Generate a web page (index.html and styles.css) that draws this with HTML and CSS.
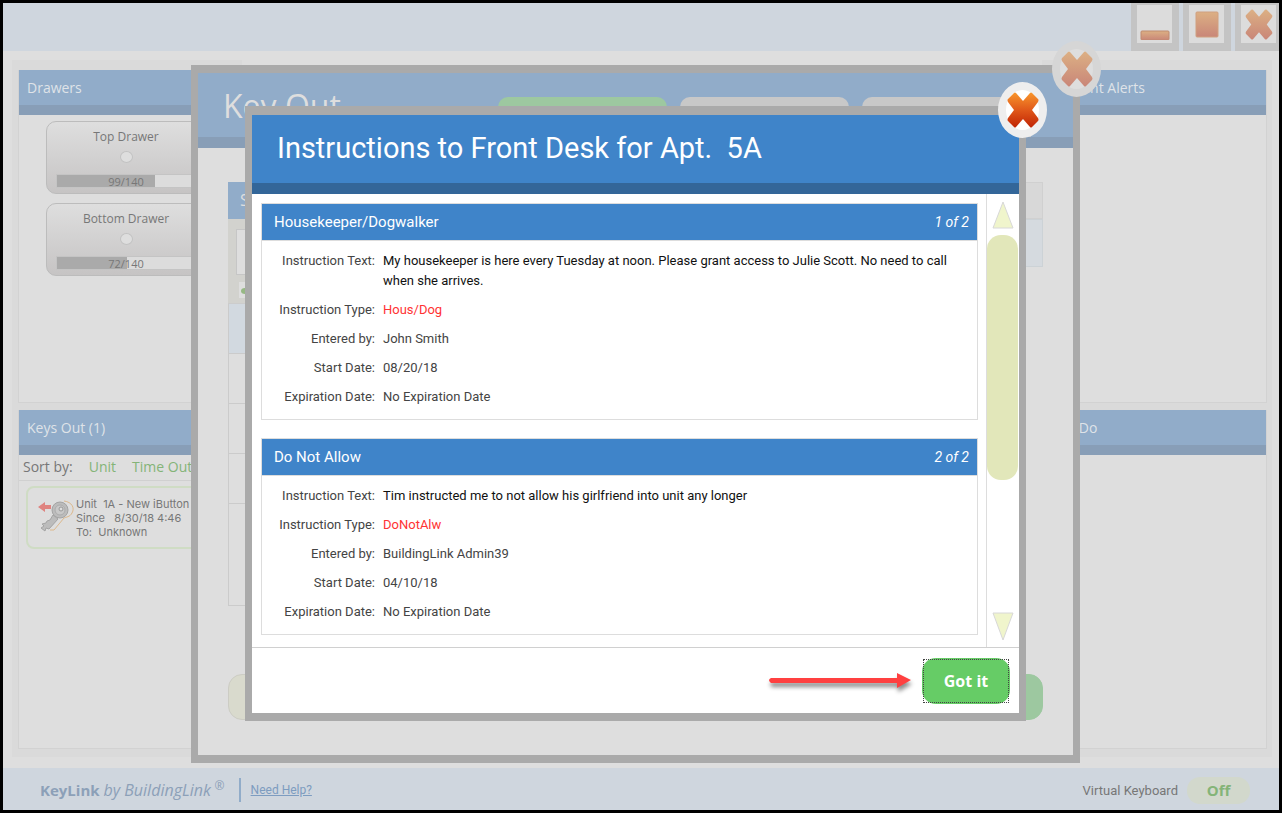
FILE: index.html
```html
<!DOCTYPE html>
<html lang="en">

<head>
  <title>KeyLink</title>

  <meta charset="utf-8">
  <meta name="viewport" content="width=device-width, initial-scale=1">
  <link rel="stylesheet" href="styles.css">
</head>

<body>
  <!-- shared icon shapes -->
  <svg class="defs" width="0" height="0" aria-hidden="true">
    <defs>
      <linearGradient id="orange" x1="0" y1="0" x2="0" y2="1">
        <stop offset="0" stop-color="#f8962c" />
        <stop offset="0.5" stop-color="#e0581a" />
        <stop offset="1" stop-color="#c02404" />
      </linearGradient>
      <linearGradient id="orangeDim" x1="0" y1="0" x2="0" y2="1">
        <stop offset="0" stop-color="#dcb084" />
        <stop offset="1" stop-color="#c98678" />
      </linearGradient>
      <path id="cross" d="M9 1 L16 9 L23 1 Q24 0 25 1 L31 7 Q32 8 31 10 L25 18 L31 26 Q32 28 31 29 L25 35 Q24 36 23 35 L16 27 L9 35 Q8 36 7 35 L1 29 Q0 28 1 26 L7 18 L1 10 Q0 8 1 7 L7 1 Q8 0 9 1 Z" />
    </defs>
  </svg>

  <div class="app">
    <header class="titlebar">
      <button class="win-btn" type="button" aria-label="Minimize">
        <svg width="30" height="32" viewBox="0 0 30 32">
          <rect x="1" y="23" width="28" height="9" rx="1" fill="url(#orangeDim)" stroke="#c08a70" />
        </svg>
      </button>
      <button class="win-btn" type="button" aria-label="Maximize">
        <svg width="30" height="32" viewBox="0 0 30 32">
          <rect x="4" y="4" width="22" height="25" rx="1" fill="url(#orangeDim)" stroke="#d0a080" />
        </svg>
      </button>
      <button class="win-btn" type="button" aria-label="Close window">
        <svg width="28" height="31" viewBox="0 0 32 36">
          <use href="#cross" fill="url(#orangeDim)" />
        </svg>
      </button>
    </header>

    <main class="board">
      <div class="column">
        <section class="panel panel-top">
          <h2>Drawers</h2>
          <div class="drawers">
            <div class="drawer">
              <h3>Top Drawer</h3>
              <span class="knob"></span>
              <div class="meter">
                <div class="fill" style="width: 71%"></div>
                <span>99/140</span>
              </div>
            </div>
            <div class="drawer">
              <h3>Bottom Drawer</h3>
              <span class="knob"></span>
              <div class="meter">
                <div class="fill" style="width: 51%"></div>
                <span>72/140</span>
              </div>
            </div>
          </div>
        </section>
        <section class="panel panel-bottom">
          <h2>Keys Out (1)</h2>
          <div class="sort">
            <span>Sort by:</span>
            <a href="#unit">Unit</a>
            <a href="#time">Time Out</a>
          </div>
          <div class="key-card">
            <svg width="36" height="32" viewBox="0 0 36 32" aria-hidden="true">
              <path d="M0 7 L7 2 V5 H13 V9 H7 V12 Z" fill="#df8480" />
              <path d="M26 1 C34 2 37 8 34 13 C32 17 28 17 26 18 L16 30 L12 30" fill="none" stroke="#dcb88c" stroke-width="1" />
              <path d="M15 15 L20 19 L11 29 L8 28 L7 31 L3 28 L6 26 L4 24 L8 23 L9 21 L12 20 Z" fill="#bcbcbc" stroke="#a4a4a4" />
              <circle cx="22" cy="10" r="8" fill="#bcbcbc" stroke="#a4a4a4" />
              <circle cx="22" cy="10" r="5" fill="#c8c8c8" stroke="#acacac" />
              <circle cx="23" cy="9" r="2" fill="#dedede" stroke="#989898" />
            </svg>
            <p>
              Unit&nbsp; 1A - New iButton<br>
              Since&nbsp;&nbsp; 8/30/18 4:46<br>
              To:&nbsp; Unknown
            </p>
          </div>
        </section>
      </div>
      <div class="column column-right">
        <section class="panel panel-top">
          <h2>Recent Alerts</h2>
        </section>
        <section class="panel panel-bottom">
          <h2>To Do</h2>
        </section>
      </div>
    </main>

    <footer class="statusbar">
      <p class="brand"><b>KeyLink</b> <i>by BuildingLink</i> <sup>®</sup></p>
      <a class="help" href="#help">Need Help?</a>
      <label class="vk-label" for="vk">Virtual Keyboard</label>
      <button class="vk" id="vk" type="button">Off</button>
    </footer>

    <!-- key out dialog, behind the instructions -->
    <div class="layer layer-keyout">
      <div class="modal">
        <button class="close close-dim" type="button" aria-label="Close key out">
          <svg width="32" height="36" viewBox="0 0 32 36"><use href="#cross" fill="url(#orangeDim)" /></svg>
        </button>
        <header class="modal-head head-dim">
          <h1>Key Out</h1>
          <div class="steps">
            <span class="step step-on"></span>
            <span class="step"></span>
            <span class="step"></span>
          </div>
        </header>
        <div class="keyout-body">
          <div class="search">
            <h2>Search</h2>
            <div class="search-box">
              <input type="text" aria-label="Search">
              <span class="tick"><svg width="10" height="8" viewBox="0 0 10 8"><ellipse cx="5" cy="4" rx="4" ry="3" fill="#96b884" /></svg></span>
            </div>
            <div class="list-row row-on"></div>
            <div class="list-row"></div>
            <div class="list-row"></div>
            <div class="list-row"></div>
            <div class="list-row row-last"></div>
          </div>
          <div class="info">
            <div class="info-head"></div>
            <div class="info-row"></div>
          </div>
        </div>
        <div class="keyout-actions">
          <button class="act" type="button" aria-label="Back"></button>
          <button class="act act-go" type="button" aria-label="Next"></button>
        </div>
      </div>
    </div>

    <div class="layer layer-instructions">
      <div class="modal modal-active" role="dialog" aria-labelledby="title">
        <button class="close" type="button" aria-label="Close">
          <svg width="32" height="36" viewBox="0 0 32 36"><use href="#cross" fill="url(#orange)" /></svg>
        </button>
        <header class="modal-head">
          <h1 id="title">Instructions to Front Desk for Apt.&nbsp; 5A</h1>
        </header>
        <div class="modal-body">
          <div class="cards">
            <article class="card">
              <h2>Housekeeper/Dogwalker <i>1 of 2</i></h2>
              <dl>
                <dt>Instruction Text:</dt>
                <dd class="text">My housekeeper is here every Tuesday at noon. Please grant access to Julie Scott. No need to call when she arrives.</dd>
                <dt>Instruction Type:</dt>
                <dd class="type">Hous/Dog</dd>
                <dt>Entered by:</dt>
                <dd>John Smith</dd>
                <dt>Start Date:</dt>
                <dd>08/20/18</dd>
                <dt>Expiration Date:</dt>
                <dd>No Expiration Date</dd>
              </dl>
            </article>
            <article class="card">
              <h2>Do Not Allow <i>2 of 2</i></h2>
              <dl>
                <dt>Instruction Text:</dt>
                <dd class="text">Tim instructed me to not allow his girlfriend into unit any longer</dd>
                <dt>Instruction Type:</dt>
                <dd class="type">DoNotAlw</dd>
                <dt>Entered by:</dt>
                <dd>BuildingLink Admin39</dd>
                <dt>Start Date:</dt>
                <dd>04/10/18</dd>
                <dt>Expiration Date:</dt>
                <dd>No Expiration Date</dd>
              </dl>
            </article>
          </div>
          <div class="scroll">
            <button type="button" aria-label="Scroll up">
              <svg width="24" height="30" viewBox="0 0 24 30"><path d="M12 2 L22 28 H2 Z" fill="#f0f5cc" stroke="#d8d8d8" /></svg>
            </button>
            <div class="track"><div class="thumb"></div></div>
            <button type="button" aria-label="Scroll down">
              <svg width="24" height="30" viewBox="0 0 24 30"><path d="M12 28 L22 1 H2 Z" fill="#f0f5cc" stroke="#d8d8d8" /></svg>
            </button>
          </div>
        </div>
        <footer class="modal-foot">
          <svg class="arrow" width="146" height="26" viewBox="0 0 146 26" aria-hidden="true">
            <path d="M4 10 H130 V5 L144 12 L130 20 V15 H4 Q0 12 4 10 Z" fill="#ff4040" />
          </svg>
          <button class="got-it" type="button"><span>Got it</span></button>
        </footer>
      </div>
    </div>
  </div>
</body>

</html>
```
FILE: styles.css
```css
* {
  box-sizing: border-box;
}

body {
  margin: 0;
  font-family: "Open Sans", sans-serif;
  color: #777;
}

h1,
h2,
h3,
p,
dl,
dd {
  margin: 0;
  font-weight: normal;
}

button {
  padding: 0;
  border: 0;
  font-family: inherit;
}

svg {
  display: block;
}

.defs {
  position: absolute;
}

.app {
  position: relative;
  display: flex;
  flex-direction: column;
  min-height: 100vh;
  border: 3px solid #000;
  background: #dedede;
}

/* title bar */
.titlebar {
  display: flex;
  justify-content: flex-end;
  gap: 4px;
  height: 48px;
  background: #cfd6de;
}

.win-btn {
  display: flex;
  justify-content: center;
  align-items: center;
  width: 48px;
  border: solid #c4c4c4;
  border-width: 2px 7px 8px 6px;
  background: #dcdcdc;
}

.win-btn:last-child {
  width: 44px;
  border-right-width: 3px;
}

/* board */
.board {
  flex: 1;
  display: flex;
  justify-content: space-between;
  padding: 9px 7px 11px 9px;
}

.column {
  display: flex;
  flex-direction: column;
  gap: 7px;
  width: 230px;
  padding: 10px 0 8px 6px;
  background: #dadada;
}

.column-right {
  padding: 10px 5px 8px 0;
}

.panel {
  border: 1px solid #d2d2d2;
  border-top: 0;
  background: #dedede;
}

.panel-top {
  flex: 333;
}

.panel-bottom {
  flex: 339;
}

.panel h2 {
  height: 45px;
  padding-left: 8px;
  border-bottom: 10px solid #889eb7;
  background: #91acc9;
  color: #dfe3e8;
  font-size: 14px;
  line-height: 36px;
}

.column-right h2 {
  padding-left: 16px;
}

.drawers {
  display: flex;
  flex-direction: column;
  gap: 9px;
  padding: 6px 0 0 27px;
}

.drawer {
  display: flex;
  flex-direction: column;
  align-items: center;
  width: 160px;
  height: 73px;
  padding: 5px 9px;
  border: 1px solid #bcbcbc;
  border-radius: 10px;
  background: linear-gradient(#dedede, #c6c4c4);
}

.drawer h3 {
  font-size: 12px;
  line-height: 20px;
}

.knob {
  width: 13px;
  height: 13px;
  margin: 4px 0 11px;
  border: 1px solid #c2c2c2;
  border-radius: 50%;
  background: #dedede;
}

.meter {
  position: relative;
  width: 100%;
  height: 14px;
  border: 1px solid #c4c4c4;
  background: #dcdcdc;
  font-size: 11px;
  line-height: 13px;
  text-align: center;
}

.meter .fill {
  position: absolute;
  top: 0;
  bottom: 0;
  left: 0;
  background: #aaa;
}

.meter span {
  position: relative;
}

.sort {
  display: flex;
  gap: 16px;
  height: 26px;
  padding-left: 4px;
  border-bottom: 1px solid #d0d0d0;
  font-size: 14px;
  line-height: 24px;
  white-space: nowrap;
}

.sort a {
  color: #84b478;
  text-decoration: none;
}

.key-card {
  display: flex;
  gap: 2px;
  margin: 5px 0 0 7px;
  height: 63px;
  padding: 9px 0 0 10px;
  border: 2px solid #cfdcc4;
  border-radius: 8px;
  font-family: Inter, sans-serif;
  font-size: 11px;
  line-height: 14px;
  white-space: nowrap;
}

.key-card svg {
  flex: none;
  margin-top: 3px;
}

/* status bar */
.statusbar {
  display: flex;
  align-items: center;
  height: 42px;
  padding: 2px 29px 0 37px;
  background: #cfd6de;
}

.brand {
  padding-right: 14px;
  border-right: 2px solid #91acc9;
  color: #8ca0b8;
  font-size: 15px;
  line-height: 24px;
}

.brand i {
  font-size: 16px;
}

.brand sup {
  font-size: 12px;
  line-height: 10px;
}

.help {
  margin-left: 10px;
  color: #7d9cc0;
  font-family: Roboto, sans-serif;
  font-size: 12px;
}

.vk-label {
  margin-left: auto;
  font-family: Roboto, sans-serif;
  font-size: 13px;
}

.vk {
  width: 63px;
  height: 27px;
  margin-left: 9px;
  border-radius: 13px;
  background: #d2d8cc;
  color: #84b478;
  font-size: 15px;
  font-weight: bold;
}

/* dialogs */
.layer {
  position: absolute;
  inset: 0;
  display: flex;
}

.layer-keyout {
  padding: 62px 199px 47px 188px;
}

.layer-instructions {
  padding: 103px 253px 89px 242px;
}

.modal {
  position: relative;
  flex: 1;
  display: flex;
  flex-direction: column;
  min-width: 0;
  border: solid #aaa;
  border-width: 8px 7px;
  background: #dedede;
}

.modal-active {
  border-width: 9px 7px 8px;
  background: #fff;
  font-family: Roboto, sans-serif;
}

.close {
  position: absolute;
  top: -33px;
  right: -28px;
  display: flex;
  justify-content: center;
  align-items: center;
  width: 49px;
  height: 56px;
  border: 8px solid #eee;
  border-radius: 50%;
  background: #fff;
}

.close svg {
  flex: none;
}

.close-dim {
  top: -32px;
  border-color: #d6d6d6;
  background: #dedede;
}

.modal-head {
  height: 79px;
  padding-left: 25px;
  border-bottom: 11px solid #336699;
  background: #3f84c9;
  color: #fff;
}

.modal-head h1 {
  font-size: 29px;
  line-height: 66px;
  white-space: nowrap;
}

.head-dim {
  display: flex;
  justify-content: space-between;
  height: 75px;
  padding: 0 42px 0 25px;
  border-color: #889eb7;
  background: #91acc9;
  color: #dedede;
}

.head-dim h1 {
  font-size: 32px;
}

.steps {
  display: flex;
  gap: 13px;
  padding-top: 24px;
}

.step {
  width: 169px;
  border-radius: 10px 10px 0 0;
  background: #c8c8c8;
}

.step-on {
  background: #9dc8a0;
}

.keyout-body {
  flex: 1;
  display: flex;
  justify-content: space-between;
  padding: 34px 30px 0;
}

.search {
  width: 250px;
}

.search h2 {
  height: 37px;
  padding-left: 12px;
  background: #91acc9;
  color: #dedede;
  font-size: 16px;
  line-height: 36px;
}

.search-box {
  height: 85px;
  padding: 10px 8px 0;
  border-bottom: 1px solid #ccc;
  background: #d2d2ce;
}

.search-box input {
  display: block;
  width: 100%;
  height: 46px;
  border: 1px solid #c6c6c6;
  background: #dedede;
}

.tick {
  display: block;
  width: 20px;
  height: 16px;
  margin: 7px 0 0 3px;
  padding: 5px 0 0 1px;
  background: #dedede;
}

.list-row {
  height: 50px;
  border: 1px solid #cbcbcb;
  border-top: 0;
}

.row-on {
  background: #d2d9e0;
}

.row-last {
  height: 102px;
}

.info {
  width: 250px;
}

.info-head {
  height: 37px;
  border: 1px solid #d0d0d0;
  background: #d8d8d8;
}

.info-row {
  height: 48px;
  border: 1px solid #ccd2d6;
  background: #d5dadf;
}

.keyout-actions {
  display: flex;
  justify-content: space-between;
  padding: 0 30px 35px;
}

.act {
  width: 120px;
  height: 46px;
  border: 1px solid #ccccc4;
  border-radius: 14px;
  background: #d9dacd;
}

.act-go {
  border-color: #9dc8a0;
  background: #9dc8a0;
}

/* instructions */
.modal-body {
  flex: 1;
  display: flex;
  border-bottom: 1px solid #d0d0d0;
}

.cards {
  flex: 1;
  display: flex;
  flex-direction: column;
  gap: 18px;
  padding: 9px 8px 12px 9px;
}

.card {
  border: 1px solid #ddd;
}

.card h2 {
  display: flex;
  justify-content: space-between;
  height: 37px;
  padding: 0 8px 0 12px;
  border-bottom: 1px solid #ddd;
  background: #3f84c9;
  color: #fff;
  font-size: 15px;
  line-height: 36px;
}

.card h2 i {
  font-size: 14px;
}

.card dl {
  display: grid;
  grid-template-columns: 113px 1fr;
  gap: 9px 8px;
  padding: 10px 24px 12px 0;
  color: #444;
  font-size: 13px;
  line-height: 20px;
}

.card dt {
  text-align: right;
}

.card .text {
  color: #111;
}

.card .type {
  color: #ff3333;
}

.scroll {
  display: flex;
  flex-direction: column;
  align-items: center;
  width: 33px;
  padding: 6px 0 5px;
  border-left: 1px solid #ddd;
}

.scroll button {
  background: none;
}

.track {
  flex: 1;
  align-self: stretch;
  padding: 5px 1px 0 0;
}

.thumb {
  height: 65%;
  border-radius: 14px;
  background: #e2e7ba;
}

.modal-foot {
  display: flex;
  justify-content: flex-end;
  align-items: center;
  gap: 9px;
  height: 65px;
  padding-right: 9px;
}

.arrow {
  filter: drop-shadow(1px 4px 2px rgba(0, 0, 0, 0.45));
}

.got-it {
  width: 88px;
  height: 46px;
  padding: 1px;
  border-radius: 14px;
  background: #66cc66;
  color: #fff;
  font-family: "Open Sans", sans-serif;
  font-size: 16px;
  font-weight: bold;
}

/* square focus frame inside the rounded button */
.got-it span {
  display: block;
  border: 1px dotted #444;
  line-height: 42px;
}
```
